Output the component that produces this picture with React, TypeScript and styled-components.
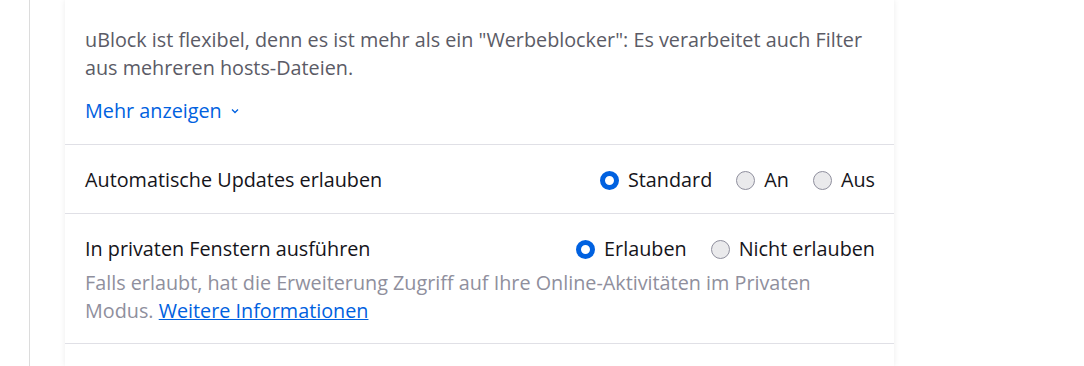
import React from "react";
import styled, { createGlobalStyle } from "styled-components";

const Global = createGlobalStyle`
  html, body { margin: 0; padding: 0; background: #fff; }
  body { font-family: "Open Sans", "Noto Sans", sans-serif; -webkit-font-smoothing: antialiased; }
`;

const Page = styled.div`
  display: flex;
  height: 366px;
  overflow: hidden;
`;

const Rail = styled.div`
  width: 29px;
  border-right: 1px solid #dcdcdc;
  flex: none;
`;

const Card = styled.div`
  margin-left: 35px;
  width: 829px;
  background: #fff;
  box-shadow: 0 0 6px rgba(0, 0, 0, 0.08);
  display: flex;
  flex-direction: column;
  align-self: stretch;
`;

const Section = styled.div<{ $pt?: number; $pb?: number }>`
  padding: ${(p) => p.$pt ?? 0}px 19px ${(p) => p.$pb ?? 0}px 20px;
  border-bottom: 1px solid #e0e0e6;
`;

const Description = styled.p`
  margin: 0;
  font-size: 19.8px;
  line-height: 28px;
  color: #5b5b66;
  white-space: nowrap;
`;

const MoreLink = styled.a`
  display: inline-flex;
  align-items: center;
  gap: 8px;
  margin-top: 15px;
  font-size: 19.8px;
  line-height: 28px;
  color: #0061e0;
  text-decoration: none;
  cursor: pointer;
`;

const Row = styled.div`
  display: flex;
  align-items: center;
  justify-content: space-between;
`;

const Label = styled.span`
  font-size: 19.8px;
  line-height: 28px;
  color: #15141a;
`;

const Options = styled.div`
  display: flex;
  align-items: center;
  gap: 24px;
`;

const Option = styled.label`
  display: flex;
  align-items: center;
  gap: 9px;
  font-size: 19.8px;
  line-height: 28px;
  color: #15141a;
`;

const Radio = styled.span<{ $checked?: boolean }>`
  box-sizing: border-box;
  width: 19px;
  height: 19px;
  border-radius: 50%;
  background: ${(p) => (p.$checked ? "#fff" : "#eaeaec")};
  border: ${(p) => (p.$checked ? "5px solid #0061e0" : "1px solid #8f8f9d")};
  flex: none;
`;

const Hint = styled.p`
  margin: 6px 0 0;
  font-size: 19.8px;
  line-height: 28px;
  color: #8f8f9d;
  white-space: nowrap;
`;

const HintLink = styled.a`
  color: #0061e0;
  text-decoration: underline;
`;

const Chevron = () => (
  <svg width="10" height="10" viewBox="0 0 10 10" fill="none">
    <path d="M2 3.5 L5 6.5 L8 3.5" stroke="#0061e0" strokeWidth="1.3" />
  </svg>
);

export default function App() {
  return (
    <>
      <Global />
      <Page>
        <Rail />
        <Card>
          <Section $pt={26} $pb={19}>
            <Description>
              uBlock ist flexibel, denn es ist mehr als ein "Werbeblocker": Es verarbeitet auch Filter
              <br />
              aus mehreren hosts-Dateien.
            </Description>
            <MoreLink>
              Mehr anzeigen <Chevron />
            </MoreLink>
          </Section>
          <Section $pt={21} $pb={19}>
            <Row>
              <Label>Automatische Updates erlauben</Label>
              <Options>
                <Option><Radio $checked />Standard</Option>
                <Option><Radio />An</Option>
                <Option><Radio />Aus</Option>
              </Options>
            </Row>
          </Section>
          <Section $pt={21} $pb={18}>
            <Row>
              <Label>In privaten Fenstern ausführen</Label>
              <Options>
                <Option><Radio $checked />Erlauben</Option>
                <Option><Radio />Nicht erlauben</Option>
              </Options>
            </Row>
            <Hint>
              Falls erlaubt, hat die Erweiterung Zugriff auf Ihre Online-Aktivitäten im Privaten
              <br />
              Modus. <HintLink>Weitere Informationen</HintLink>
            </Hint>
          </Section>
        </Card>
      </Page>
    </>
  );
}
